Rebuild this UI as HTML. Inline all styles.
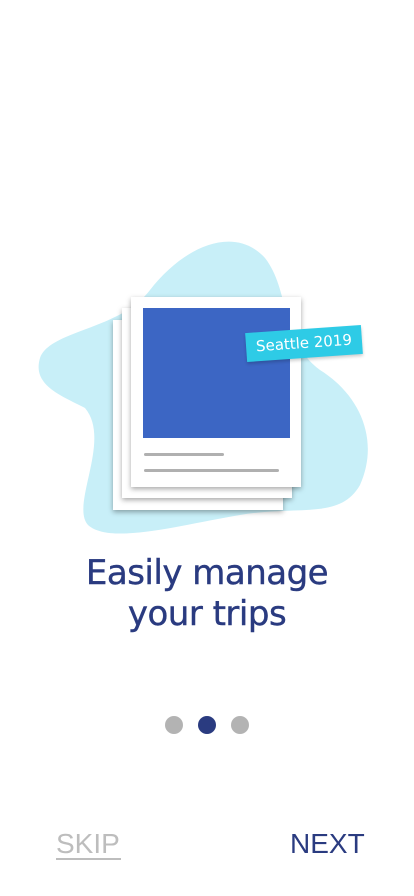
<!DOCTYPE html>
<html><head><meta charset="utf-8"><style>
html,body{margin:0;padding:0;background:#fff;width:414px;height:896px;overflow:hidden;position:relative;font-family:"Liberation Sans",sans-serif}
.card{position:absolute;width:170px;height:190px;background:#fff;box-shadow:0 2px 5px rgba(0,0,0,.35)}
h1{position:absolute;top:553px;left:0;width:414px;margin:0;text-align:center;font-weight:normal;font-size:34px;line-height:41px;color:#2a3b80;font-family:"DejaVu Sans","Liberation Sans",sans-serif;letter-spacing:-0.5px;-webkit-text-stroke:0.4px #2a3b80}
.dot{position:absolute;top:716px;width:18px;height:18px;border-radius:50%;background:#b3b3b3}
</style></head><body>
<svg style="position:absolute;left:0;top:0" width="414" height="560">
<path d="M150,290 C185,245 235,225 265,258 C290,290 280,340 320,370 C360,395 380,440 360,485 C340,520 300,505 240,515 C180,525 110,545 88,525 C70,505 112,440 85,408 C60,395 32,385 40,358 C50,330 120,330 150,290 Z" fill="#c8eff8"/>
</svg>
<div class="card" style="left:113px;top:320px"></div>
<div class="card" style="left:122px;top:308px"></div>
<div class="card" style="left:131px;top:297px">
<div style="position:absolute;left:12px;top:11px;width:147px;height:130px;background:#3c66c4"></div>
<div style="position:absolute;left:13px;top:156px;width:80px;height:3px;border-radius:2px;background:#b0b0b0"></div>
<div style="position:absolute;left:13px;top:172px;width:135px;height:3px;border-radius:2px;background:#b0b0b0"></div>
</div>
<div style="position:absolute;left:246px;top:329px;width:116px;height:29px;background:#2ecbe6;transform:rotate(-4deg);color:#fff;font-size:15px;line-height:29px;text-align:center;font-family:'DejaVu Sans','Liberation Sans',sans-serif;box-shadow:0 2px 3px rgba(0,0,0,.2)">Seattle 2019</div>
<h1>Easily manage<br>your trips</h1>
<div class="dot" style="left:165px"></div>
<div class="dot" style="left:198px;background:#2a3b80"></div>
<div class="dot" style="left:231px"></div>
<div style="position:absolute;left:56px;top:828px;font-size:28px;color:#bdbdbd;line-height:32px">SKIP</div>
<div style="position:absolute;left:56px;top:858px;width:65px;height:2px;background:#bdbdbd"></div>
<div style="position:absolute;left:290px;top:828px;font-size:28px;color:#2a3b80;line-height:32px">NEXT</div>
</body></html>
